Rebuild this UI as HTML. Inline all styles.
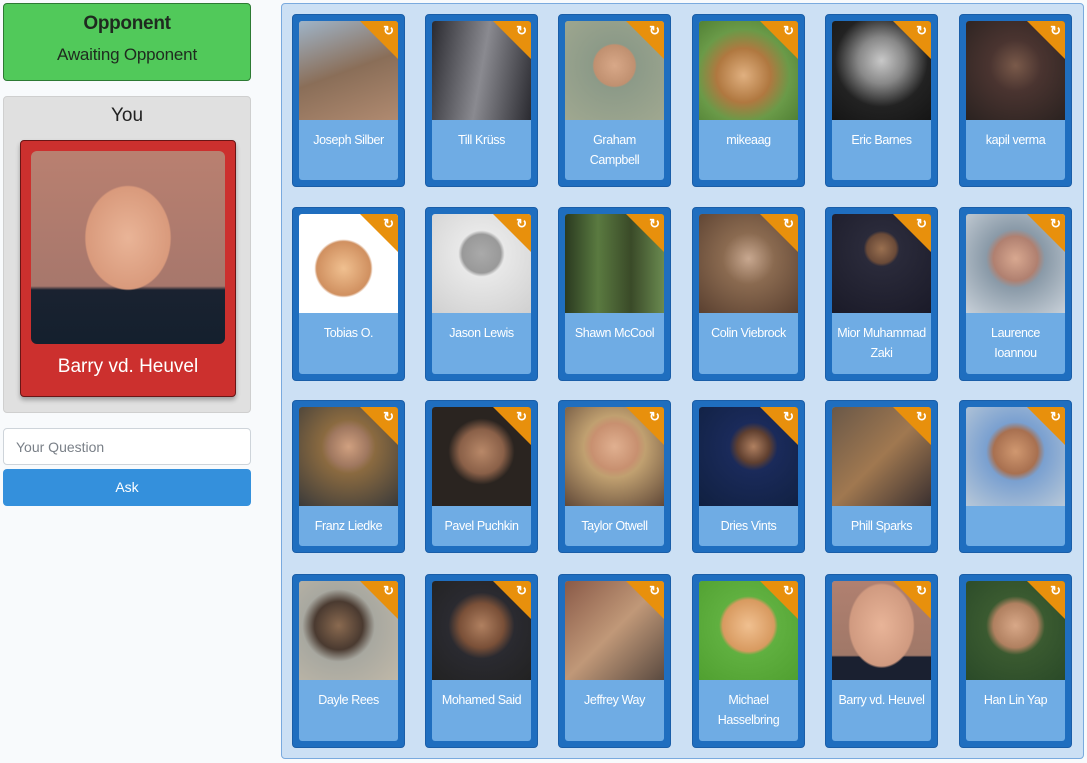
<!DOCTYPE html>
<html><head><meta charset="utf-8"><style>
*{box-sizing:border-box;margin:0;padding:0}
body{width:1087px;height:763px;background:#f8fafc;font-family:"Liberation Sans",sans-serif;position:relative;overflow:hidden}
.abs{position:absolute}
.opp{left:3px;top:3px;width:248px;height:78px;background:#51c95a;border:1px solid #2d7a33;border-radius:4px;text-align:center;color:#1f2a1f}
.opp b{display:block;font-size:19px;margin-top:9px;letter-spacing:-0.3px}
.opp span{display:block;font-size:17px;margin-top:10px;letter-spacing:-0.2px}
.you{left:3px;top:96px;width:248px;height:317px;background:#e0e0e0;border:1px solid #cfcfcf;border-radius:4px}
.you h2{font-size:19px;font-weight:normal;text-align:center;margin-top:8px;color:#222}
.red{left:16px;top:43px;width:216px;height:257px;background:#cc302e;border:1px solid #6a1515;border-radius:4px;box-shadow:0 3px 5px rgba(0,0,0,.3)}
.red .ph{position:absolute;left:10px;top:10px;width:194px;height:193px;border-radius:6px;background:radial-gradient(ellipse 70px 85px at 50% 45%,#e9b497 0,#d99a7c 60%,transparent 62%),linear-gradient(#b98070,#a7776c 70%,#1a2230 72%,#14202e)}
.red .nm{position:absolute;left:0;right:0;top:215px;text-align:center;color:#fff;font-size:19px}
.inp{left:3px;top:428px;width:248px;height:37px;background:#fff;border:1px solid #ced4da;border-radius:4px;padding:10px 12px;color:#7a8088;font-size:14px}
.btn{left:3px;top:469px;width:248px;height:37px;background:#3490dc;border-radius:4px;color:#fff;font-size:14px;text-align:center;line-height:37px}
.panel{left:281px;top:3px;width:803px;height:756px;background:#cce0f4;border:1px solid #7aaade;border-radius:4px}
.c{position:absolute;width:113px;background:#1f6ebf;border:1px solid #1a5ea8;border-radius:4px}
.c .in{position:absolute;left:6px;top:6px;right:6px;bottom:6px;background:#6facE4;border-radius:3px;overflow:hidden}
.c .p{position:absolute;left:0;top:0;width:100%;height:99px}
.c .cor{position:absolute;right:0;top:0;width:0;height:0;border-top:38px solid #e8900c;border-left:38px solid transparent}
.c .ic{position:absolute;right:4px;top:3px;color:#fff;font-size:13px;font-weight:bold;line-height:13px}
.c .n{position:absolute;left:-2px;right:-2px;top:109px;text-align:center;color:#fff;font-size:12.5px;letter-spacing:-0.4px;line-height:20px}
</style></head><body>
<div class="abs opp"><b>Opponent</b><span>Awaiting Opponent</span></div>
<div class="abs you"><h2>You</h2><div class="abs red"><div class="ph"></div><div class="nm">Barry vd. Heuvel</div></div></div>
<div class="abs inp">Your Question</div>
<div class="abs btn">Ask</div>
<div class="abs panel"></div>

<div class="c" style="left:292px;top:14px;height:173px"><div class="in"><div class="p" style="background:linear-gradient(160deg,#9fb4c8,#8a6e58 50%,#b08a70)"></div><div class="cor"></div><div class="ic">↻</div><div class="n">Joseph Silber</div></div></div>
<div class="c" style="left:425px;top:14px;height:173px"><div class="in"><div class="p" style="background:linear-gradient(100deg,#2a2a30,#8a8a90 50%,#2a2a30)"></div><div class="cor"></div><div class="ic">↻</div><div class="n">Till Krüss</div></div></div>
<div class="c" style="left:558px;top:14px;height:173px"><div class="in"><div class="p" style="background:radial-gradient(circle at 50% 45%,#d8a888 0,#c09070 28%,#8c9a88 30%,#a0a890)"></div><div class="cor"></div><div class="ic">↻</div><div class="n">Graham<br>Campbell</div></div></div>
<div class="c" style="left:692px;top:14px;height:173px"><div class="in"><div class="p" style="background:radial-gradient(circle at 45% 55%,#e0b080 0,#b07840 35%,#6a9a48 60%,#4a7a30)"></div><div class="cor"></div><div class="ic">↻</div><div class="n">mikeaag</div></div></div>
<div class="c" style="left:825px;top:14px;height:173px"><div class="in"><div class="p" style="background:radial-gradient(circle at 50% 40%,#c8c8c8 0,#888 30%,#222 60%,#151515)"></div><div class="cor"></div><div class="ic">↻</div><div class="n">Eric Barnes</div></div></div>
<div class="c" style="left:959px;top:14px;height:173px"><div class="in"><div class="p" style="background:radial-gradient(circle at 50% 45%,#7a5a4a 0,#4a3430 35%,#2a2220)"></div><div class="cor"></div><div class="ic">↻</div><div class="n">kapil verma</div></div></div>

<div class="c" style="left:292px;top:207px;height:174px"><div class="in"><div class="p" style="background:radial-gradient(circle at 45% 55%,#f0c090 0,#d09060 35%,#fff 38%)"></div><div class="cor"></div><div class="ic">↻</div><div class="n">Tobias O.</div></div></div>
<div class="c" style="left:425px;top:207px;height:174px"><div class="in"><div class="p" style="background:radial-gradient(circle at 50% 40%,#aaa 0,#999 25%,#e8e8e8 30%,#d0d0d0)"></div><div class="cor"></div><div class="ic">↻</div><div class="n">Jason Lewis</div></div></div>
<div class="c" style="left:558px;top:207px;height:174px"><div class="in"><div class="p" style="background:linear-gradient(90deg,#2a3a20,#5a7a40,#3a4a28,#6a8a50)"></div><div class="cor"></div><div class="ic">↻</div><div class="n">Shawn McCool</div></div></div>
<div class="c" style="left:692px;top:207px;height:174px"><div class="in"><div class="p" style="background:radial-gradient(circle at 50% 45%,#c8a890 0,#8a6a50 35%,#5a4030)"></div><div class="cor"></div><div class="ic">↻</div><div class="n">Colin Viebrock</div></div></div>
<div class="c" style="left:825px;top:207px;height:174px"><div class="in"><div class="p" style="background:radial-gradient(circle at 50% 35%,#9a7050 0,#6a4a38 18%,#2a2a3a 22%,#1a1a28)"></div><div class="cor"></div><div class="ic">↻</div><div class="n">Mior Muhammad<br>Zaki</div></div></div>
<div class="c" style="left:959px;top:207px;height:174px"><div class="in"><div class="p" style="background:radial-gradient(circle at 50% 45%,#d8a890 0,#b08070 30%,#8a9aa8 40%,#c8d0d8)"></div><div class="cor"></div><div class="ic">↻</div><div class="n">Laurence<br>Ioannou</div></div></div>

<div class="c" style="left:292px;top:400px;height:153px"><div class="in"><div class="p" style="background:radial-gradient(circle at 50% 40%,#d0a080 0,#a07860 25%,#8a6a40 35%,#3a3a3a)"></div><div class="cor"></div><div class="ic">↻</div><div class="n">Franz Liedke</div></div></div>
<div class="c" style="left:425px;top:400px;height:153px"><div class="in"><div class="p" style="background:radial-gradient(circle at 50% 45%,#b88868 0,#8a6048 30%,#2a2420 45%)"></div><div class="cor"></div><div class="ic">↻</div><div class="n">Pavel Puchkin</div></div></div>
<div class="c" style="left:558px;top:400px;height:153px"><div class="in"><div class="p" style="background:radial-gradient(circle at 50% 40%,#e0b090 0,#c89070 30%,#c0a070 40%,#604838)"></div><div class="cor"></div><div class="ic">↻</div><div class="n">Taylor Otwell</div></div></div>
<div class="c" style="left:692px;top:400px;height:153px"><div class="in"><div class="p" style="background:radial-gradient(circle at 55% 40%,#b08060 0,#604030 20%,#1a2a5a 30%,#102040)"></div><div class="cor"></div><div class="ic">↻</div><div class="n">Dries Vints</div></div></div>
<div class="c" style="left:825px;top:400px;height:153px"><div class="in"><div class="p" style="background:linear-gradient(135deg,#6a5848,#a07850 50%,#3a3030)"></div><div class="cor"></div><div class="ic">↻</div><div class="n">Phill Sparks</div></div></div>
<div class="c" style="left:959px;top:400px;height:153px"><div class="in"><div class="p" style="background:radial-gradient(circle at 50% 45%,#d09870 0,#a87050 30%,#7aa0d0 40%,#b8c8d8)"></div><div class="cor"></div><div class="ic">↻</div><div class="n"></div></div></div>

<div class="c" style="left:292px;top:574px;height:174px"><div class="in"><div class="p" style="background:radial-gradient(circle at 40% 45%,#8a6a50 0,#4a3a30 30%,#a8a8a0 45%,#c0b8a8)"></div><div class="cor"></div><div class="ic">↻</div><div class="n">Dayle Rees</div></div></div>
<div class="c" style="left:425px;top:574px;height:174px"><div class="in"><div class="p" style="background:radial-gradient(circle at 50% 45%,#b08060 0,#7a5038 30%,#2a2a30 45%,#222)"></div><div class="cor"></div><div class="ic">↻</div><div class="n">Mohamed Said</div></div></div>
<div class="c" style="left:558px;top:574px;height:174px"><div class="in"><div class="p" style="background:linear-gradient(135deg,#8a5a48,#c09878 50%,#5a4a40)"></div><div class="cor"></div><div class="ic">↻</div><div class="n">Jeffrey Way</div></div></div>
<div class="c" style="left:692px;top:574px;height:174px"><div class="in"><div class="p" style="background:radial-gradient(circle at 50% 45%,#f0c090 0,#d89a60 35%,#60b040 40%,#50a030)"></div><div class="cor"></div><div class="ic">↻</div><div class="n">Michael<br>Hasselbring</div></div></div>
<div class="c" style="left:825px;top:574px;height:174px"><div class="in"><div class="p" style="background:radial-gradient(ellipse 35px 45px at 50% 45%,#e8b498 0,#d09a80 90%,transparent 95%),linear-gradient(#b08070,#a07868 75%,#1a2030 77%)"></div><div class="cor"></div><div class="ic">↻</div><div class="n">Barry vd. Heuvel</div></div></div>
<div class="c" style="left:959px;top:574px;height:174px"><div class="in"><div class="p" style="background:radial-gradient(circle at 50% 45%,#d8a888 0,#b08060 30%,#3a5a30 40%,#2a4a28)"></div><div class="cor"></div><div class="ic">↻</div><div class="n">Han Lin Yap</div></div></div>
</body></html>
